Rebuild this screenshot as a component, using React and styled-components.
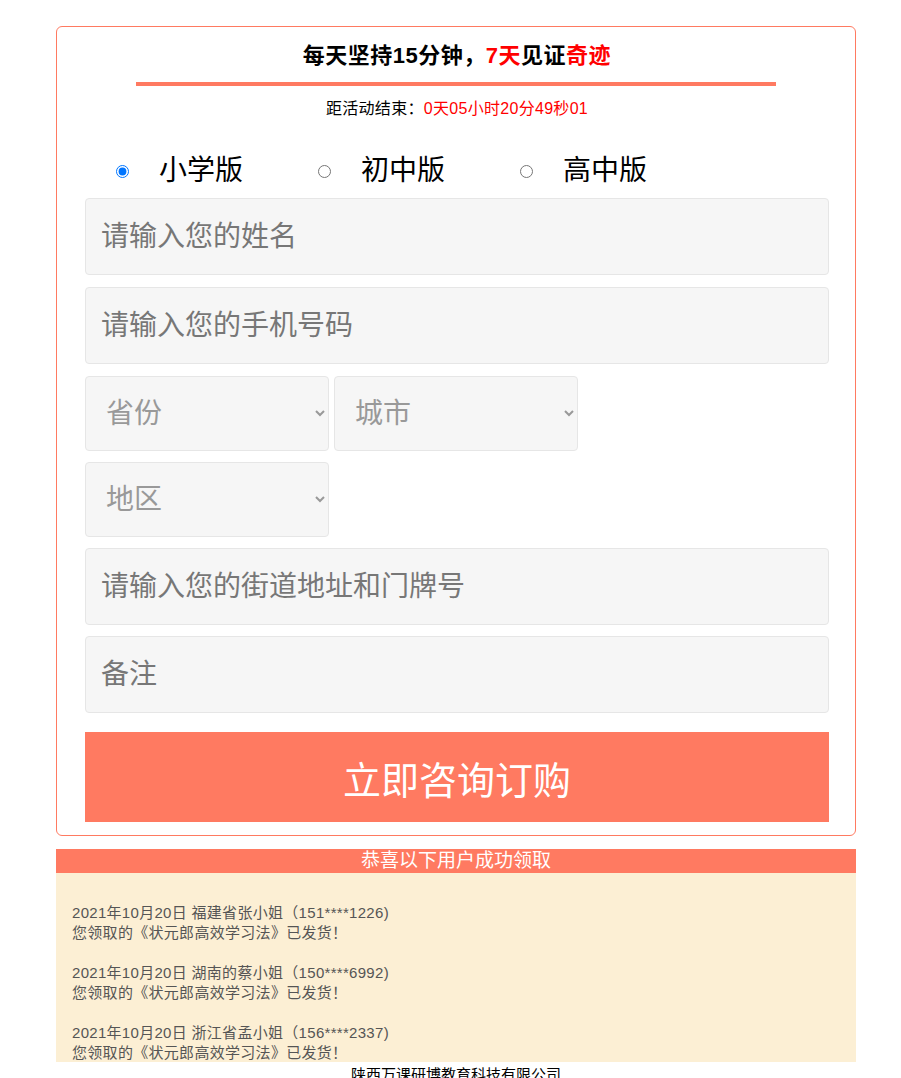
import React from "react";
import styled, { createGlobalStyle } from "styled-components";

const Global = createGlobalStyle`
  html, body { margin: 0; padding: 0; background: #fff; }
  body { font-family: "Liberation Sans", "Noto Sans CJK SC", sans-serif; color: #000; }
  * { box-sizing: border-box; }
`;

const Page = styled.div`
  width: 800px;
  margin-left: 56px;
  padding-top: 26px;
`;

const Card = styled.div`
  border: 1px solid #ff7a61;
  border-radius: 6px;
  padding: 0 26px 13px 28px;
  display: flex;
  flex-direction: column;
`;

const Title = styled.h1`
  margin: 14px 0 0;
  font-size: 22px;
  line-height: 30px;
  font-weight: bold;
  text-align: center;
  letter-spacing: 0.5px;
`;

const Red = styled.span`
  color: #ff0000;
`;

const Bar = styled.div`
  width: 640px;
  height: 4px;
  margin: 11px auto 0;
  background: #ff7a61;
  position: relative;
  left: -1px;
`;

const Countdown = styled.p`
  margin: 13px 0 0;
  font-size: 16px;
  line-height: 20px;
  text-align: center;
  letter-spacing: 0.3px;
`;

const RadioRow = styled.div`
  display: flex;
  padding-left: 28px;
  margin-top: 32px;
  height: 40px;
  align-items: center;
`;

const RadioItem = styled.label`
  display: flex;
  align-items: center;
  width: 202px;
  font-size: 28px;
  line-height: 40px;
  color: #000;
`;

const Radio = styled.input`
  width: 13px;
  height: 13px;
  margin: 0 30px 0 3px;
`;

const TextInput = styled.input`
  display: block;
  width: 100%;
  height: 77px;
  margin-top: ${(p) => p.$mt}px;
  padding: 0 15px;
  border: 1px solid #e6e6e6;
  border-radius: 4px;
  background: #f6f6f6;
  font-family: inherit;
  font-size: 28px;
  color: #333;
  outline: none;
  &::placeholder { color: #777; }
`;

const SelectRow = styled.div`
  display: flex;
  gap: 5px;
  margin-top: ${(p) => p.$mt}px;
`;

const Select = styled.select`
  width: 244px;
  height: 75px;
  padding: 0 10px 0 16px;
  border: 1px solid #e6e6e6;
  border-radius: 4px;
  background-color: #f6f6f6;
  font-family: inherit;
  font-size: 28px;
  color: #999;
  outline: none;
`;

const SubmitButton = styled.button`
  display: block;
  width: 100%;
  height: 90px;
  margin-top: 19px;
  border: none;
  background: #ff7a61;
  color: #fff;
  font-family: inherit;
  font-size: 38px;
  cursor: pointer;
`;

const NoticeHead = styled.div`
  margin-top: 13px;
  height: 24px;
  background: #ff7a61;
  color: #fff;
  font-size: 19px;
  line-height: 24px;
  text-align: center;
`;

const NoticeList = styled.div`
  height: 189px;
  overflow: hidden;
  background: #fcefd4;
  padding: 30px 16px 0;
  color: #555;
  font-size: 15px;
  line-height: 20px;
  letter-spacing: 0.3px;
`;

const Entry = styled.p`
  margin: 0 0 20px;
`;

const Footer = styled.div`
  text-align: center;
  font-size: 15px;
  line-height: 22px;
  color: #000;
  padding-top: 2px;
`;

const entries = [
  ["2021年10月20日 福建省张小姐（151****1226)", "您领取的《状元郎高效学习法》已发货！"],
  ["2021年10月20日 湖南的蔡小姐（150****6992)", "您领取的《状元郎高效学习法》已发货！"],
  ["2021年10月20日 浙江省孟小姐（156****2337)", "您领取的《状元郎高效学习法》已发货！"],
];

export default function App() {
  return (
    <>
      <Global />
      <Page>
        <Card>
          <Title>
            每天坚持15分钟，<Red>7天</Red>见证<Red>奇迹</Red>
          </Title>
          <Bar />
          <Countdown>
            距活动结束：<Red>0天05小时20分49秒01</Red>
          </Countdown>
          <RadioRow>
            <RadioItem>
              <Radio type="radio" name="grade" defaultChecked />
              小学版
            </RadioItem>
            <RadioItem>
              <Radio type="radio" name="grade" />
              初中版
            </RadioItem>
            <RadioItem>
              <Radio type="radio" name="grade" />
              高中版
            </RadioItem>
          </RadioRow>
          <TextInput $mt={7} placeholder="请输入您的姓名" />
          <TextInput $mt={12} placeholder="请输入您的手机号码" />
          <SelectRow $mt={12}>
            <Select defaultValue="">
              <option value="">省份</option>
            </Select>
            <Select defaultValue="">
              <option value="">城市</option>
            </Select>
          </SelectRow>
          <SelectRow $mt={11}>
            <Select defaultValue="">
              <option value="">地区</option>
            </Select>
          </SelectRow>
          <TextInput $mt={11} placeholder="请输入您的街道地址和门牌号" />
          <TextInput $mt={11} placeholder="备注" />
          <SubmitButton>立即咨询订购</SubmitButton>
        </Card>
        <NoticeHead>恭喜以下用户成功领取</NoticeHead>
        <NoticeList>
          {entries.map(([a, b], i) => (
            <Entry key={i}>
              {a}
              <br />
              {b}
            </Entry>
          ))}
        </NoticeList>
        <Footer>陕西万课研博教育科技有限公司</Footer>
      </Page>
    </>
  );
}
